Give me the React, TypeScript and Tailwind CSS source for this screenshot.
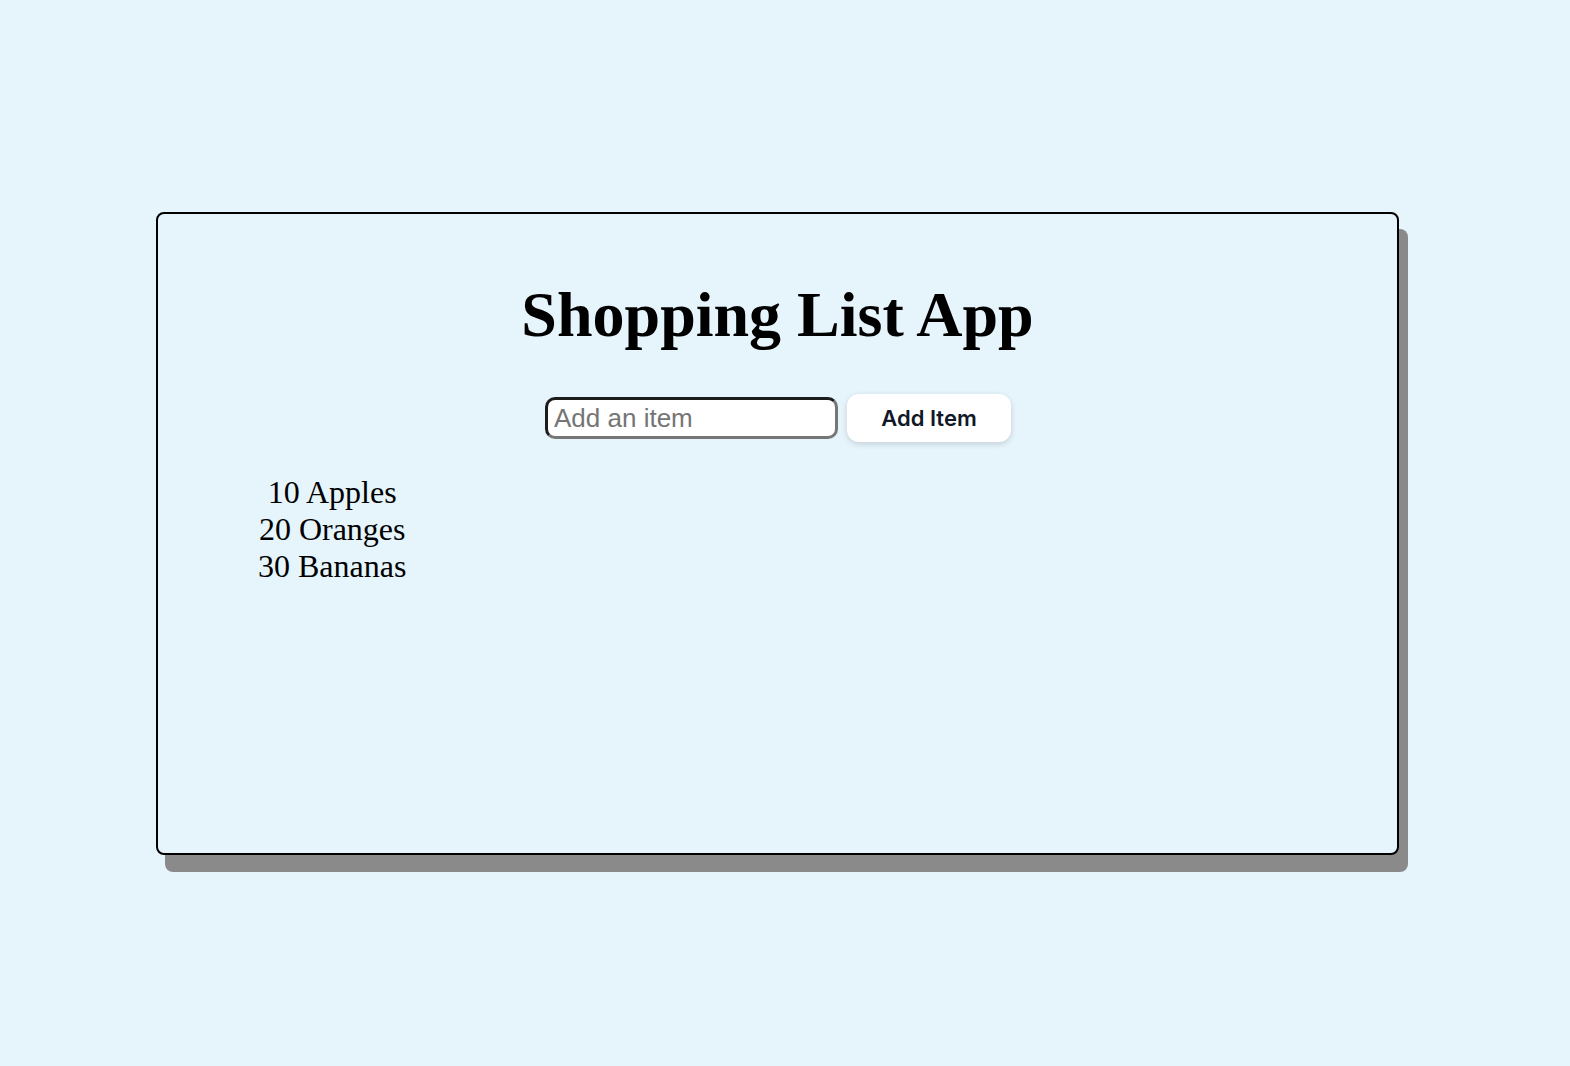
import { useState } from 'react';

const initialItems = ['10 Apples', '20 Oranges', '30 Bananas'];

export default function App() {
    const [items, setItems] = useState<string[]>(initialItems);
    const [text, setText] = useState('');

    const addItem = () => {
        if (!text.trim()) return;
        setItems([...items, text.trim()]);
        setText('');
    };

    return (
        <div className="min-h-[1066px] w-full bg-[#e6f4fc] pt-[212px]">
            <div className="ml-[156px] w-[1243px] h-[643px] rounded-[8px] border-2 border-black bg-[#e6f4fc] shadow-[9px_17px_0_0_#8a8a8a] flex flex-col">
                <h1 className="mt-[65px] text-center text-[64px] leading-[71px] font-bold text-black font-['Liberation_Serif',serif]">
                    Shopping List App
                </h1>

                <div className="mt-[44px] flex items-center justify-center gap-[9px] pl-[1px]">
                    <input
                        type="text"
                        value={text}
                        onChange={(e) => setText(e.target.value)}
                        placeholder="Add an item"
                        className="w-[293px] h-[42px] rounded-[10px] border-[3px] border-t-[#1c1c1c] border-l-[#1c1c1c] border-b-[#767676] border-r-[#767676] bg-white px-[6px] text-[26px] text-black placeholder:text-[#757575] outline-none font-['Liberation_Sans',Arial,sans-serif]"
                    />
                    <button
                        type="button"
                        onClick={addItem}
                        className="w-[164px] h-[48px] rounded-[12px] bg-white text-[22px] font-semibold text-[#111827] shadow-[0_2px_6px_rgba(0,0,0,0.15)] font-['Inter',sans-serif]"
                    >
                        Add Item
                    </button>
                </div>

                <div className="mt-[32px] pl-[100px]">
                    <div className="w-fit text-center text-[32px] leading-[37px] text-black font-['Liberation_Serif',serif]">
                        {items.map((item, i) => (
                            <div key={i}>{item}</div>
                        ))}
                    </div>
                </div>
            </div>
        </div>
    );
}
